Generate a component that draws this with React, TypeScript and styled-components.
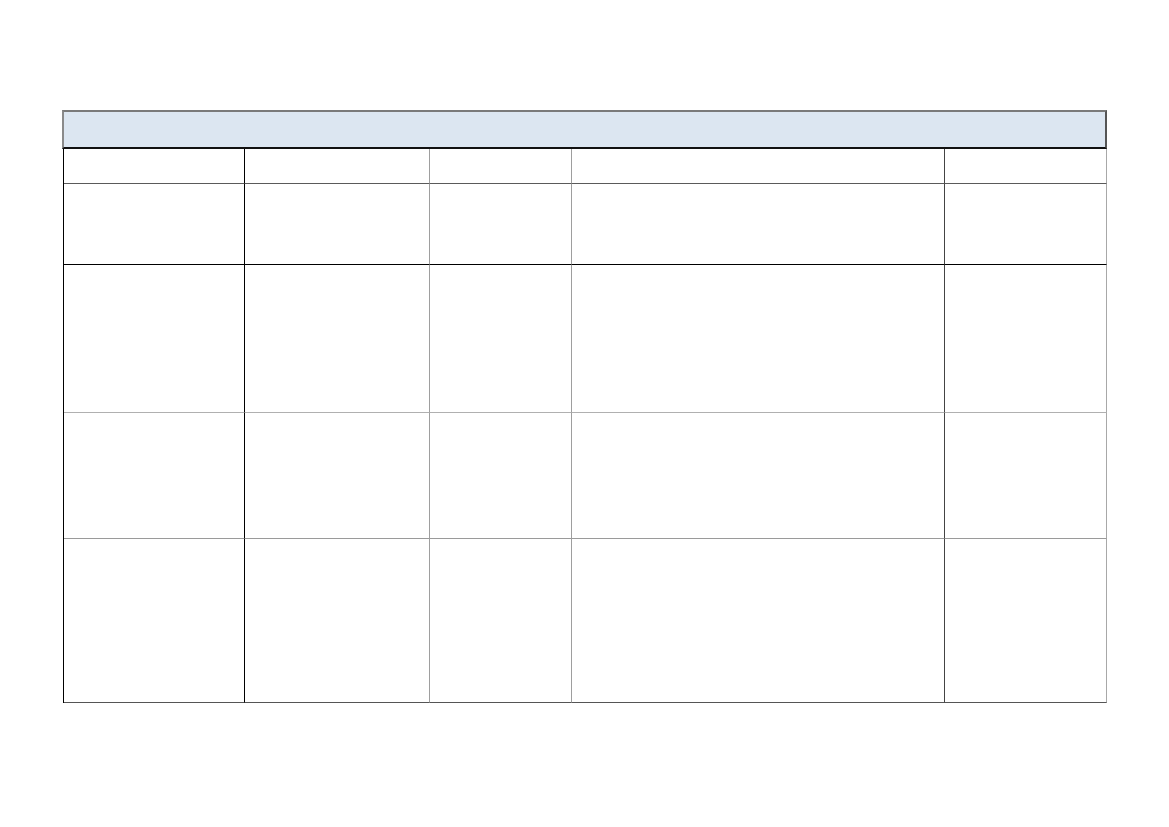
import React from "react";
import styled, { createGlobalStyle } from "styled-components";

const Global = createGlobalStyle`
  html, body { margin: 0; padding: 0; background: #ffffff; }
  body { font-family: "Liberation Sans", Arial, sans-serif; }
`;

const Page = styled.div`
  width: 1169px;
  height: 827px;
  box-sizing: border-box;
  padding: 110px 0 0 62px;
  background: #fff;
`;

const Sheet = styled.div`
  width: 1045px;
  display: flex;
  flex-direction: column;
`;

const TitleBar = styled.div`
  height: 39px;
  box-sizing: border-box;
  background: #dce6f1;
  border-top: 2px solid #7a7a7a;
  border-left: 2px solid #8a8a8a;
  border-right: 2px solid #555555;
  border-bottom: 2px solid #111111;
`;

const Grid = styled.div`
  display: grid;
  grid-template-columns: 181px 185px 142px 373px 162px;
  margin-left: 1px;
  border-left: 1px solid #000;
  width: 1044px;
  box-sizing: border-box;
`;

const Cell = styled.div<{ $right: string; $bottom: string; $h: number }>`
  height: ${(p) => p.$h}px;
  box-sizing: border-box;
  border-right: 1px solid ${(p) => p.$right};
  border-bottom: 1px solid ${(p) => p.$bottom};
`;

const colBorders = ["#000000", "#9e9e9e", "#9e9e9e", "#444444", "#a8a8a8"];
const rows: { h: number; bottom: string }[] = [
  { h: 35, bottom: "#5a5a5a" },
  { h: 81, bottom: "#000000" },
  { h: 148, bottom: "#b0b0b0" },
  { h: 126, bottom: "#9a9a9a" },
  { h: 164, bottom: "#555555" },
];

export default function App() {
  return (
    <Page>
      <Global />
      <Sheet>
        <TitleBar />
        <Grid>
          {rows.map((r, ri) =>
            colBorders.map((c, ci) => (
              <Cell key={`${ri}-${ci}`} $right={c} $bottom={r.bottom} $h={r.h} />
            ))
          )}
        </Grid>
      </Sheet>
    </Page>
  );
}
